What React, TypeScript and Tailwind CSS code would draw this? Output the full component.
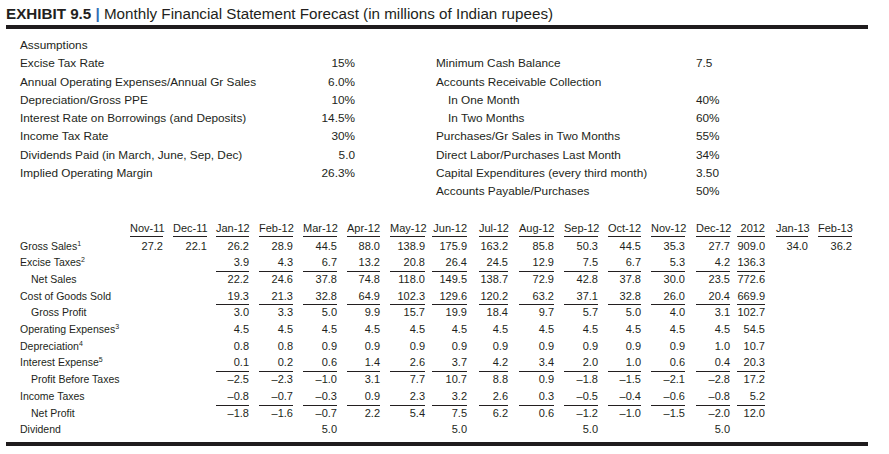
const leftAssumptions = [
  ["Excise Tax Rate", "15%"],
  ["Annual Operating Expenses/Annual Gr Sales", "6.0%"],
  ["Depreciation/Gross PPE", "10%"],
  ["Interest Rate on Borrowings (and Deposits)", "14.5%"],
  ["Income Tax Rate", "30%"],
  ["Dividends Paid (in March, June, Sep, Dec)", "5.0"],
  ["Implied Operating Margin", "26.3%"],
]

const rightAssumptions: { label: string; value: string; indent?: boolean }[] = [
  { label: "Minimum Cash Balance", value: "7.5" },
  { label: "Accounts Receivable Collection", value: "" },
  { label: "In One Month", value: "40%", indent: true },
  { label: "In Two Months", value: "60%", indent: true },
  { label: "Purchases/Gr Sales in Two Months", value: "55%" },
  { label: "Direct Labor/Purchases Last Month", value: "34%" },
  { label: "Capital Expenditures (every third month)", value: "3.50" },
  { label: "Accounts Payable/Purchases", value: "50%" },
]

// inner width = width of the header text, so the rules line up under it
const cols = [
  { head: "Nov-11", iw: "w-[33px]" },
  { head: "Dec-11", iw: "w-[34px]" },
  { head: "Jan-12", iw: "w-[33px]" },
  { head: "Feb-12", iw: "w-[34px]" },
  { head: "Mar-12", iw: "w-[34px]" },
  { head: "Apr-12", iw: "w-[33px]" },
  { head: "May-12", iw: "w-[35px]" },
  { head: "Jun-12", iw: "w-[35px]" },
  { head: "Jul-12", iw: "w-[29px]" },
  { head: "Aug-12", iw: "w-[35px]" },
  { head: "Sep-12", iw: "w-[34px]" },
  { head: "Oct-12", iw: "w-[33px]" },
  { head: "Nov-12", iw: "w-[34px]" },
  { head: "Dec-12", iw: "w-[34px]" },
  { head: "2012", iw: "w-[28px]" },
  { head: "Jan-13", iw: "w-[32px]" },
  { head: "Feb-13", iw: "w-[34px]" },
]

const gridCols =
  "grid grid-cols-[110px_33px_44px_42px_44px_44px_43px_45px_42px_41px_46px_44px_43px_44px_45px_35px_43px_44px]"

type Row = { label: string; sup?: string; indent?: boolean; line?: boolean; vals: (string | null)[] }

const m = (vals: string[]) => [null, null, ...vals, null, null]

const rows: Row[] = [
  {
    label: "Gross Sales",
    sup: "1",
    vals: ["27.2", "22.1", "26.2", "28.9", "44.5", "88.0", "138.9", "175.9", "163.2", "85.8", "50.3", "44.5", "35.3", "27.7", "909.0", "34.0", "36.2"],
  },
  { label: "Excise Taxes", sup: "2", vals: m(["3.9", "4.3", "6.7", "13.2", "20.8", "26.4", "24.5", "12.9", "7.5", "6.7", "5.3", "4.2", "136.3"]) },
  { label: "Net Sales", indent: true, line: true, vals: m(["22.2", "24.6", "37.8", "74.8", "118.0", "149.5", "138.7", "72.9", "42.8", "37.8", "30.0", "23.5", "772.6"]) },
  { label: "Cost of Goods Sold", vals: m(["19.3", "21.3", "32.8", "64.9", "102.3", "129.6", "120.2", "63.2", "37.1", "32.8", "26.0", "20.4", "669.9"]) },
  { label: "Gross Profit", indent: true, line: true, vals: m(["3.0", "3.3", "5.0", "9.9", "15.7", "19.9", "18.4", "9.7", "5.7", "5.0", "4.0", "3.1", "102.7"]) },
  { label: "Operating Expenses", sup: "3", vals: m(["4.5", "4.5", "4.5", "4.5", "4.5", "4.5", "4.5", "4.5", "4.5", "4.5", "4.5", "4.5", "54.5"]) },
  { label: "Depreciation", sup: "4", vals: m(["0.8", "0.8", "0.9", "0.9", "0.9", "0.9", "0.9", "0.9", "0.9", "0.9", "0.9", "1.0", "10.7"]) },
  { label: "Interest Expense", sup: "5", vals: m(["0.1", "0.2", "0.6", "1.4", "2.6", "3.7", "4.2", "3.4", "2.0", "1.0", "0.6", "0.4", "20.3"]) },
  { label: "Profit Before Taxes", indent: true, line: true, vals: m(["–2.5", "–2.3", "–1.0", "3.1", "7.7", "10.7", "8.8", "0.9", "–1.8", "–1.5", "–2.1", "–2.8", "17.2"]) },
  { label: "Income Taxes", vals: m(["–0.8", "–0.7", "–0.3", "0.9", "2.3", "3.2", "2.6", "0.3", "–0.5", "–0.4", "–0.6", "–0.8", "5.2"]) },
  { label: "Net Profit", indent: true, line: true, vals: m(["–1.8", "–1.6", "–0.7", "2.2", "5.4", "7.5", "6.2", "0.6", "–1.2", "–1.0", "–1.5", "–2.0", "12.0"]) },
  { label: "Dividend", vals: m(["", "", "5.0", "", "", "5.0", "", "", "5.0", "", "", "5.0", ""]) },
]

export default function App() {
  return (
    <div className="w-[889px] h-[454px] bg-white text-[#231f20] font-['Liberation_Sans',Arial,sans-serif] pl-[6px] pt-[5px]">
      {/* Title */}
      <div className="text-[15.2px] leading-[18px] whitespace-nowrap">
        <span className="font-bold">EXHIBIT 9.5</span>
        <span className="font-bold text-[#2f6db5]"> | </span>
        <span>Monthly Financial Statement Forecast (in millions of Indian rupees)</span>
      </div>
      <div className="mt-[2px] h-[4px] w-[862px] bg-[#1f1c1d]" />

      {/* Assumptions */}
      <div className="mt-[7px] pl-[14px] flex text-[11.8px] leading-[18.3px]">
        <div className="w-[335px]">
          <div>Assumptions</div>
          {leftAssumptions.map(([label, value]) => (
            <div key={label} className="flex justify-between">
              <span>{label}</span>
              <span>{value}</span>
            </div>
          ))}
        </div>
        <div className="ml-[81px]">
          <div className="h-[18.3px]" />
          {rightAssumptions.map((r) => (
            <div key={r.label} className="flex">
              <span className={`w-[260px] ${r.indent ? "pl-[12px]" : ""}`}>{r.label}</span>
              <span>{r.value}</span>
            </div>
          ))}
        </div>
      </div>

      {/* Monthly table */}
      <div className="mt-[19px] pl-[14px] text-[11px]">
        <div className={`${gridCols} h-[17px] mb-[1px]`}>
          <div />
          {cols.map((c) => (
            <div key={c.head} className="flex justify-end">
              <div className={`${c.iw} border-b border-[#231f20] text-right leading-[16px] whitespace-nowrap`}>{c.head}</div>
            </div>
          ))}
        </div>
        {rows.map((r) => (
          <div key={r.label} className={`${gridCols} h-[16.7px] leading-[16.7px]`}>
            <div className={`text-[10.5px] whitespace-nowrap ${r.indent ? "pl-[11px]" : ""}`}>
              {r.label}
              {r.sup && <sup className="text-[7px] relative -top-[4px]">{r.sup}</sup>}
            </div>
            {cols.map((c, i) => {
              const v = r.vals[i]
              const ruled = r.line && v !== null
              return (
                <div key={c.head} className="flex justify-end">
                  <div
                    className={`${c.iw} h-[16.7px] text-right whitespace-nowrap ${
                      ruled ? "border-t border-[#231f20] leading-[15.7px]" : ""
                    }`}
                  >
                    {v}
                  </div>
                </div>
              )
            })}
          </div>
        ))}
      </div>
      <div className="mt-[4px] h-[4px] w-[862px] bg-[#1f1c1d]" />
    </div>
  )
}
